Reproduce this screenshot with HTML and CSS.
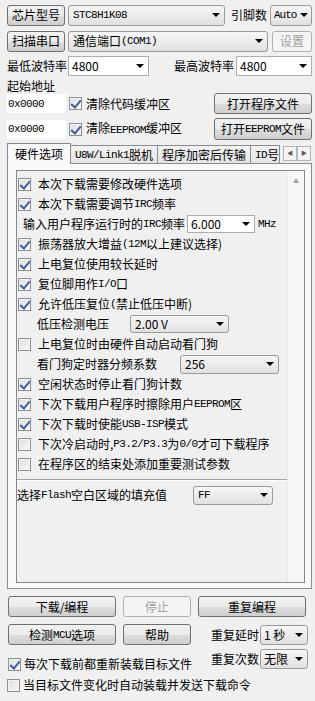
FILE: index.html
```html
<!DOCTYPE html>
<html lang="zh-CN">
<head>
    <meta charset="UTF-8">
    <meta name="viewport" content="width=device-width, initial-scale=1.0">
    <title>STC-ISP</title>
    <link rel="stylesheet" href="styles.css">
</head>
<body>
    <div class="app">
        <div class="row row-chip">
            <button class="btn btn-side">芯片型号</button>
            <div class="combo grow mono">STC8H1K08<i class="arrow"></i></div>
            <span class="label pins">引脚数</span>
            <div class="combo combo-auto mono">Auto<i class="arrow"></i></div>
        </div>

        <div class="row row-port">
            <button class="btn btn-side">扫描串口</button>
            <div class="combo grow">通信端口 <span class="mono">(COM1)</span><i class="arrow"></i></div>
            <button class="btn btn-set" disabled>设置</button>
        </div>

        <div class="row row-baud">
            <span class="label baud-lbl">最低波特率</span>
            <div class="combo edit combo-baud1">4800<i class="arrow"></i></div>
            <span class="label baud-lbl2">最高波特率</span>
            <div class="combo edit combo-baud2">4800<i class="arrow"></i></div>
        </div>

        <div class="start-lbl">起始地址</div>

        <div class="row row-addr">
            <div class="addr mono">0x0000</div>
            <span class="check on"></span>
            <span class="label">清除代码缓冲区</span>
            <button class="btn btn-open">打开程序文件</button>
        </div>
        <div class="row row-addr row-addr2">
            <div class="addr mono">0x0000</div>
            <span class="check on"></span>
            <span class="label">清除<span class="mono">EEPROM</span>缓冲区</span>
            <button class="btn btn-open">打开<span class="mono">EEPROM</span>文件</button>
        </div>

        <div class="tabs">
            <div class="tab active">硬件选项</div>
            <div class="tab"><span class="mono">U8W/Link1</span>脱机</div>
            <div class="tab">程序加密后传输</div>
            <div class="tab tab-id"><span class="mono">ID</span>号</div>
            <div class="tab-scroll">
                <span class="ts-btn">&#9664;</span>
                <span class="ts-btn">&#9654;</span>
            </div>
        </div>

        <div class="panel">
            <div class="options">
                <div class="opt-list">
                    <div class="opt"><span class="check on"></span>本次下载需要修改硬件选项</div>
                    <div class="opt"><span class="check on"></span>本次下载需要调节<span class="mono">IRC</span>频率</div>
                    <div class="opt opt-irc">输入用户程序运行时的<span class="mono">IRC</span>频率
                        <div class="combo edit combo-irc">6.000<i class="arrow"></i></div>
                        <span class="mono mhz">MHz</span>
                    </div>
                    <div class="opt"><span class="check on"></span>振荡器放大增益<span class="mono">(12M</span>以上建议选择)</div>
                    <div class="opt"><span class="check on"></span>上电复位使用较长延时</div>
                    <div class="opt"><span class="check on"></span>复位脚用作<span class="mono">I/O</span>口</div>
                    <div class="opt"><span class="check on"></span>允许低压复位<span class="mono">(</span>禁止低压中断)</div>
                    <div class="opt opt-sub">低压检测电压
                        <div class="combo combo-volt">2.00 V<i class="arrow"></i></div>
                    </div>
                    <div class="opt"><span class="check"></span>上电复位时由硬件自动启动看门狗</div>
                    <div class="opt opt-sub">看门狗定时器分频系数
                        <div class="combo combo-wdt">256<i class="arrow"></i></div>
                    </div>
                    <div class="opt"><span class="check on"></span>空闲状态时停止看门狗计数</div>
                    <div class="opt"><span class="check on"></span>下次下载用户程序时擦除用户<span class="mono">EEPROM</span>区</div>
                    <div class="opt"><span class="check on"></span>下次下载时使能<span class="mono">USB-ISP</span>模式</div>
                    <div class="opt"><span class="check"></span>下次冷启动时,<span class="mono">P3.2/P3.3</span>为<span class="mono">0/0</span>才可下载程序</div>
                    <div class="opt"><span class="check"></span>在程序区的结束处添加重要测试参数</div>
                    <div class="sep"></div>
                    <div class="opt opt-fill">选择<span class="mono">Flash</span>空白区域的填充值
                        <div class="combo combo-fill mono">FF<i class="arrow"></i></div>
                    </div>
                </div>
                <div class="scrollbar">
                    <span class="sb-up">&#9650;</span>
                </div>
            </div>
        </div>

        <div class="row row-actions">
            <button class="btn btn-big">下载/编程</button>
            <button class="btn btn-small" disabled>停止</button>
            <button class="btn btn-big">重复编程</button>
        </div>

        <div class="bottom">
            <div class="bottom-left">
                <div class="row row-help">
                    <button class="btn btn-big">检测<span class="mono">MCU</span>选项</button>
                    <button class="btn btn-small">帮助</button>
                </div>
                <div class="opt opt-bottom"><span class="check on"></span>每次下载前都重新装载目标文件</div>
            </div>
            <div class="bottom-right">
                <div class="repeat"><span class="label">重复延时</span><div class="combo combo-rep">1 秒<i class="arrow"></i></div></div>
                <div class="repeat"><span class="label">重复次数</span><div class="combo combo-rep">无限<i class="arrow"></i></div></div>
            </div>
        </div>
        <div class="opt opt-bottom opt-last"><span class="check"></span>当目标文件变化时自动装载并发送下载命令</div>
    </div>
</body>
</html>
```

FILE: styles.css
```css
* {
    margin: 0;
    padding: 0;
    box-sizing: border-box;
}

body {
    background-color: #f0f0f0;
    font-family: "Noto Sans CJK SC", "DejaVu Sans", sans-serif;
    font-size: 12px;
    line-height: 14px;
    color: #000;
}

.mono {
    font-family: "Liberation Mono", "Noto Sans CJK SC", monospace;
    font-size: 11px;
    letter-spacing: -0.6px;
}

.app {
    width: 315px;
    height: 701px;
    padding: 4px 3px 0 7px;
    overflow: hidden;
}

.row {
    display: flex;
    align-items: center;
}

.grow {
    flex: 1;
}

.label {
    white-space: nowrap;
}

/* buttons */
.btn {
    font: inherit;
    height: 21px;
    border: 1px solid #707070;
    border-radius: 3px;
    background: linear-gradient(#f2f2f2 0%, #ebebeb 50%, #dddddd 51%, #cfcfcf 100%);
    color: #000;
    display: flex;
    align-items: center;
    justify-content: center;
    white-space: nowrap;
}

.btn:disabled {
    border-color: #adb2b5;
    background: #f4f4f4;
    color: #a0a0a0;
}

.btn-side {
    width: 58px;
    margin-right: 3px;
}

.btn-set {
    width: 40px;
    margin-left: 4px;
}

/* combo boxes */
.combo {
    position: relative;
    height: 21px;
    border: 1px solid #9a9a9a;
    border-radius: 3px;
    background: linear-gradient(#f6f6f6 0%, #ececec 50%, #e0e0e0 100%);
    padding: 0 14px 0 4px;
    display: flex;
    align-items: center;
    white-space: nowrap;
}

.combo.edit {
    border-radius: 0;
    border-color: #abadb3;
    background: #fff;
    padding-left: 3px;
}

.arrow {
    position: absolute;
    right: 4px;
    top: 50%;
    margin-top: -2px;
    border-left: 4px solid transparent;
    border-right: 4px solid transparent;
    border-top: 4px solid #000;
}

.row-chip {
    height: 22px;
}

.pins {
    margin: 0 3px 0 6px;
}

.combo-auto {
    width: 42px;
    padding-left: 3px;
    letter-spacing: -1px;
}

.combo-auto .arrow {
    right: 3px;
}

.row-port {
    margin-top: 4px;
    height: 22px;
}

.row-baud {
    margin-top: 4px;
    height: 20px;
}

.row-baud .combo {
    height: 20px;
}

.baud-lbl {
    width: 61px;
}

.combo-baud1 {
    width: 81px;
}

.baud-lbl2 {
    margin-left: auto;
    margin-right: 2px;
}

.combo-baud2 {
    width: 76px;
}

.start-lbl {
    margin-top: 3px;
    height: 14px;
}

/* address rows */
.row-addr {
    height: 21px;
}

.row-addr2 {
    margin-top: 4px;
    height: 22px;
}

.addr {
    width: 59px;
    height: 19px;
    background: #fff;
    display: flex;
    align-items: center;
    padding-left: 1px;
    margin-right: 3px;
}

.row-addr .check {
    margin-right: 4px;
}

.btn-open {
    margin-left: auto;
    width: 98px;
    height: 21px;
}

.row-addr2 .btn-open {
    height: 22px;
}

/* checkboxes */
.check {
    display: inline-block;
    flex: none;
    width: 13px;
    height: 13px;
    border: 1px solid #8e8f8f;
    background: linear-gradient(135deg, #dcdcdc, #fbfbfb);
    box-shadow: inset 0 0 0 1px #f4f4f4;
    position: relative;
}

.check.on::after {
    content: "";
    position: absolute;
    left: 3px;
    top: 0;
    width: 4px;
    height: 8px;
    border-right: 2px solid #3f5ea5;
    border-bottom: 2px solid #3f5ea5;
    transform: rotate(40deg);
}

/* tabs */
.tabs {
    margin-top: 3px;
    height: 20px;
    display: flex;
    align-items: flex-end;
    position: relative;
}

.tab {
    height: 18px;
    border: 1px solid #898c95;
    border-bottom: none;
    background: linear-gradient(#f3f3f3, #e3e3e3);
    padding: 0 4px;
    display: flex;
    align-items: center;
    white-space: nowrap;
    margin-left: -1px;
}

.tab.active {
    height: 21px;
    width: 64px;
    margin-left: 0;
    margin-bottom: -1px;
    background: #f9f9f9;
    justify-content: center;
    position: relative;
    z-index: 1;
}

.tab-id {
    width: 30px;
    overflow: hidden;
}

.tab-scroll {
    display: flex;
    margin-left: auto;
    align-self: center;
    margin-right: 1px;
}

.ts-btn {
    width: 14px;
    height: 15px;
    border: 1px solid #b5b5b5;
    background: #f4f4f4;
    font-size: 6px;
    color: #5a5a5a;
    display: flex;
    align-items: center;
    justify-content: center;
}

/* option panel */
.panel {
    height: 426px;
    border: 1px solid #898c95;
    background: #f9f9f9;
    padding: 6px 6px 5px 8px;
}

.options {
    height: 100%;
    border: 1px solid #828790;
    background: #f0f0f0;
    display: flex;
}

.opt-list {
    flex: 1;
    padding-top: 3px;
}

.opt {
    height: 20px;
    display: flex;
    align-items: center;
    white-space: nowrap;
}

.opt .check {
    margin: 0 7px 0 1px;
}

.opt-irc {
    padding-left: 6px;
}

.combo-irc {
    width: 68px;
    height: 18px;
    margin-left: 2px;
}

.mhz {
    margin-left: 3px;
}

.opt-sub {
    padding-left: 20px;
}

.combo-volt {
    width: 99px;
    height: 18px;
    margin-left: 21px;
}

.combo-wdt {
    width: 99px;
    height: 19px;
    margin-left: 23px;
}

.sep {
    margin: 5px 0 3px 0;
    border-top: 1px solid #a0a0a0;
    border-bottom: 1px solid #fff;
}

.opt-fill {
    height: 22px;
}

.combo-fill {
    width: 80px;
    height: 19px;
    margin-left: 26px;
}

.scrollbar {
    width: 17px;
    background: #f7f7f7;
    border-left: 1px solid #e8e8e8;
    display: flex;
    justify-content: center;
}

.sb-up {
    margin-top: 6px;
    font-size: 6px;
    color: #a0a0a0;
    height: 8px;
    line-height: 8px;
}

/* bottom buttons */
.row-actions {
    margin-top: 7px;
    gap: 7px;
    padding-left: 1px;
}

.btn-big {
    width: 108px;
}

.btn-small {
    width: 68px;
}

.bottom {
    display: flex;
    margin-top: 7px;
    padding-left: 1px;
}

.bottom-left {
    width: 200px;
}

.row-help {
    gap: 7px;
}

.opt-bottom {
    margin-top: 12px;
    height: 14px;
}

.opt-bottom .check {
    margin: 0 3px 0 0;
}

.bottom-right {
    margin-left: 3px;
}

.repeat {
    display: flex;
    align-items: center;
    height: 21px;
    margin-bottom: 3px;
}

.combo-rep {
    width: 48px;
    height: 20px;
    margin-left: 1px;
    padding-left: 3px;
}

.opt-last {
    margin-top: 6px;
}
```
